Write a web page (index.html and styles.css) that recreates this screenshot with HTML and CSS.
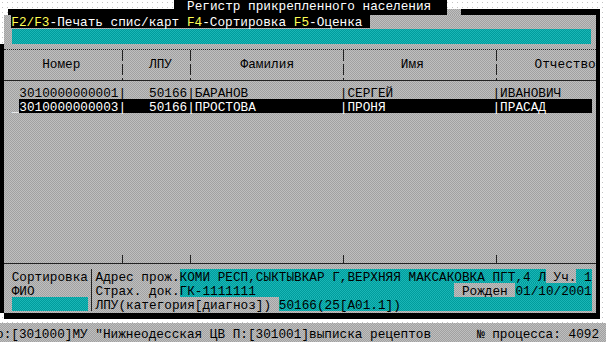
FILE: index.html
```html
<!DOCTYPE html>
<html lang="ru">
  <head>
    <meta charset="UTF-8" />
    <meta name="viewport" content="width=device-width, initial-scale=1.0" />
    <title>Регистр прикрепленного населения</title>
    <link rel="stylesheet" href="styles.css">
  </head>
  <body>
    <div class="screen">
      <!-- Title over the window frame -->
      <header class="head">
        <div class="head-side">
          <div class="sky"></div>
          <div class="edge"><span class="edge-skip"></span><span class="edge-bar"></span></div>
        </div>
        <h1 class="title">Регистр прикрепленного населения</h1>
        <div class="head-side head-side-right">
          <div class="sky"></div>
          <div class="edge"><span class="edge-notch dither"></span><span class="edge-bar"></span><span class="edge-out"></span></div>
        </div>
      </header>

      <div class="window">
        <!-- Keys + search field -->
        <div class="win-top">
          <div class="sky-gap"></div>
          <div class="win-top-inner dither">
            <div class="keys"><b>F2/F3</b>-Печать спис/карт <b>F4</b>-Сортировка <b>F5</b>-Оценка </div>
            <div class="search teal"></div>
          </div>
        </div>

        <div class="win-main dither">
          <!-- Table head -->
          <div class="thead">
            <div class="cell w15">     Номер</div>
            <div class="sep"></div>
            <div class="cell w8">   ЛПУ</div>
            <div class="sep"></div>
            <div class="cell w19">      Фамилия</div>
            <div class="sep"></div>
            <div class="cell w19">       Имя</div>
            <div class="sep"></div>
            <div class="cell grow cell-last">    Отчество</div>
          </div>

          <!-- Rows -->
          <div class="rows">
            <div class="row">  3010000000001|   50166|БАРАНОВ            |СЕРГЕЙ             |ИВАНОВИЧ</div>
            <div class="row row-sel"><span class="cursor">_</span><span class="sel">3010000000003|   50166|ПРОСТОВА           |ПРОНЯ              |ПРАСАД      </span></div>
          </div>

          <div class="spacer"></div>

          <div class="tfoot">
            <div class="w15"></div>
            <div class="tick"></div>
            <div class="w8"></div>
            <div class="tick"></div>
            <div class="w19"></div>
            <div class="tick"></div>
            <div class="w19"></div>
            <div class="tick"></div>
            <div class="grow"></div>
          </div>

          <!-- Card of the selected person -->
          <div class="panel">
            <div class="sort">
              <div class="line">Сортировка</div>
              <div class="line">ФИО</div>
              <div class="line"><span class="teal sort-box"></span></div>
            </div>
            <div class="vsep"></div>
            <div class="fields">
              <div class="line"><span>Адрес прож.</span><span class="teal">КОМИ РЕСП,СЫКТЫВКАР Г,ВЕРХНЯЯ МАКСАКОВКА ПГТ,4 Л</span><span> Уч.</span><span class="teal grow"> 1</span></div>
              <div class="line"><span>Страх. док.</span><span class="teal grow">ГК-1111111</span><span> Рожден </span><span class="teal">01/10/2001</span></div>
              <div class="line"><span>ЛПУ(категория[диагноз]) </span><span class="teal grow">50166(25[A01.1])</span></div>
            </div>
          </div>
        </div>

        <div class="win-bottom"></div>
      </div>

      <!-- Status line -->
      <div class="status dither">
        <div class="status-line">о:[301000]МУ "Нижнеодесская ЦВ П:[301001]выписка рецептов      № процесса: 4092</div>
      </div>
    </div>
  </body>
</html>
```

FILE: styles.css
```css
:root {
  --cw: 7.633px;
}

body {
  margin: 0;
  background-color: #fff;
}

.screen {
  width: 606px;
  height: 342px;
  overflow: hidden;
  font-family: "Liberation Mono", monospace;
  font-size: 12.72px;
  color: #000;
  background-color: #fff;
  background-image: radial-gradient(circle, #c4c4c4 0.7px, transparent 1px);
  background-size: 5px 5px;
}

.dither {
  background: conic-gradient(#bfbfbf 25%, #a1a1a1 0 50%, #bfbfbf 0 75%, #a1a1a1 0) 0 0 / 2px 2px;
}

.teal {
  background: conic-gradient(#1ab6b6 25%, #009c9c 0 50%, #1ab6b6 0 75%, #009c9c 0) 0 0 / 2px 2px;
}

/* header */
.head {
  display: flex;
  height: 15px;
}

.head-side {
  width: 174px;
  display: flex;
  flex-direction: column;
}

.head-side-right {
  flex: 1;
  width: auto;
}

.sky {
  height: 9px;
}

.edge {
  height: 6px;
  display: flex;
}

.edge-skip {
  width: 8px;
}

.edge-bar {
  flex: 1;
  background-color: #000;
}

.edge-notch {
  width: 14px;
}

.edge-out {
  width: 6px;
}

.title {
  margin: 0;
  width: 273px;
  height: 15px;
  padding-left: 13px;
  box-sizing: border-box;
  background-color: #000;
  color: #fff;
  font-size: inherit;
  font-weight: normal;
  line-height: 13px;
  white-space: pre;
}

/* window */
.window {
  width: 600px;
}

.win-top {
  display: flex;
  height: 29px;
}

.sky-gap {
  width: 4px;
}

.win-top-inner {
  flex: 1;
  border-right: 4px solid #000;
}

.keys {
  margin-left: 7.33px;
  width: fit-content;
  height: 13px;
  line-height: 15px;
  background-color: #000;
  color: #fff;
  white-space: pre;
}

.keys b {
  font-weight: normal;
  color: #ffff55;
}

.search {
  margin: 1px 0 0 8px;
  width: 579px;
  height: 15px;
}

.win-main {
  height: 269px;
  box-sizing: border-box;
  border-left: 4px solid #000;
  border-right: 4px solid #000;
  padding: 5px 0 2px;
  display: flex;
  flex-direction: column;
  overflow: hidden;
}

.win-bottom {
  margin-left: 4px;
  height: 6px;
  background-color: #000;
}

/* table */
.w15 { width: calc(var(--cw) * 15); flex: none; }
.w8 { width: calc(var(--cw) * 8); flex: none; }
.w19 { width: calc(var(--cw) * 19); flex: none; }
.grow { flex: 1; }

.thead {
  display: flex;
  height: 32px;
  box-sizing: border-box;
  border-top: 1px dotted #222;
  border-bottom: 1px solid #222;
}

.cell {
  padding-top: 6px;
  line-height: 17px;
  white-space: pre;
}

.cell-last {
  padding-left: 4px;
}

.sep {
  width: var(--cw);
  flex: none;
  background: repeating-linear-gradient(#222 0 11px, transparent 11px 14px) center / 1px 100% no-repeat;
}

.rows {
  margin-top: 4px;
}

.row {
  height: 14px;
  line-height: 17px;
  white-space: pre;
}

.row-sel {
  display: flex;
  padding-left: var(--cw);
}

.cursor {
  color: #fff;
}

.sel {
  background-color: #000;
  color: #fff;
}

.spacer {
  flex: 1;
}

.tfoot {
  display: flex;
  height: 9px;
  box-sizing: border-box;
  border-bottom: 1px solid #222;
}

.tick {
  width: var(--cw);
  flex: none;
  background: linear-gradient(#222, #222) center / 1px 100% no-repeat;
}

/* bottom card */
.panel {
  margin-top: 5px;
  display: flex;
  height: 42px;
}

.sort {
  width: calc(var(--cw) * 11);
  padding-left: var(--cw);
  box-sizing: border-box;
}

.line {
  display: flex;
  height: 14px;
  line-height: 17px;
  white-space: pre;
}

.sort-box {
  flex: 1;
}

.vsep {
  width: var(--cw);
  background: linear-gradient(#222, #222) center / 1px 100% no-repeat;
}

.fields {
  width: calc(var(--cw) * 65);
}

/* status line */
.status {
  margin-top: 4px;
  height: 19px;
  padding-top: 3px;
  box-sizing: border-box;
}

.status-line {
  margin-left: calc(3.7px - var(--cw));
  height: 14px;
  line-height: 17px;
  white-space: pre;
}
```
